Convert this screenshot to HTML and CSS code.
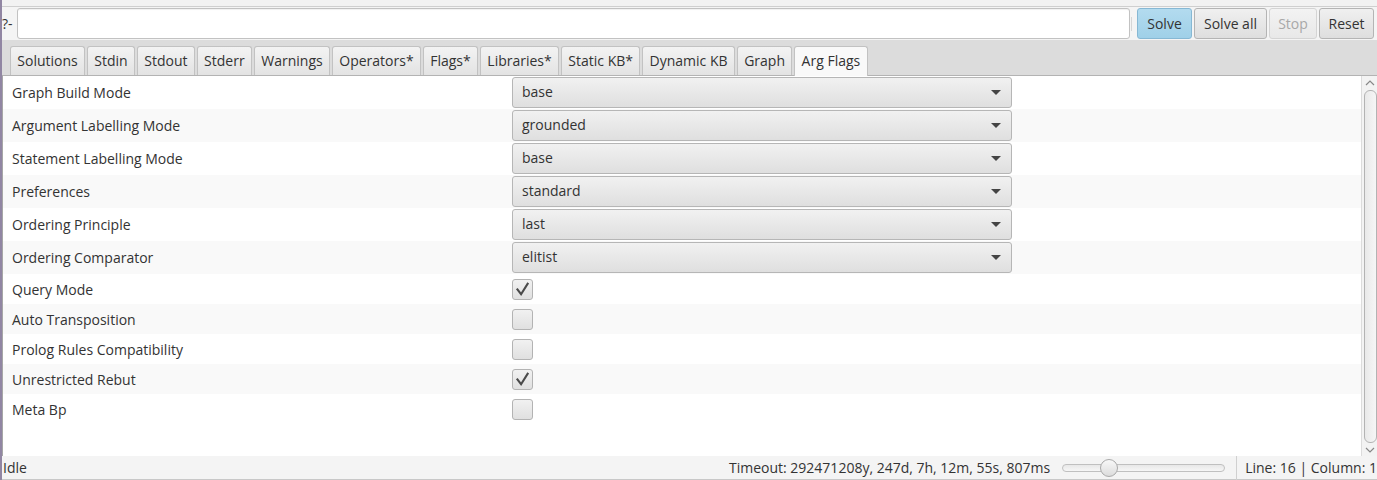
FILE: index.html
```html
<!DOCTYPE html>
<html>
<head>
<meta charset="utf-8">
<link rel="stylesheet" href="styles.css">
</head>
<body>
<div class="app">
  <div class="topstrip"></div>
  <div class="query">
    <span class="prompt">?-</span>
    <div class="field"></div>
    <div class="sep"></div>
    <div class="btns">
      <button class="btn solve">Solve</button>
      <button class="btn solveall">Solve all</button>
      <button class="btn stop disabled">Stop</button>
      <button class="btn reset">Reset</button>
    </div>
  </div>
  <div class="tabbar">
    <div class="tab">Solutions</div>
    <div class="tab">Stdin</div>
    <div class="tab">Stdout</div>
    <div class="tab">Stderr</div>
    <div class="tab">Warnings</div>
    <div class="tab">Operators*</div>
    <div class="tab">Flags*</div>
    <div class="tab">Libraries*</div>
    <div class="tab">Static KB*</div>
    <div class="tab">Dynamic KB</div>
    <div class="tab">Graph</div>
    <div class="tab active">Arg Flags</div>
  </div>
  <div class="content">
    <div class="rows">
      <div class="row combo-row"><span class="label">Graph Build Mode</span><div class="combo"><span>base</span><i class="arrow"></i></div></div>
      <div class="row combo-row alt"><span class="label">Argument Labelling Mode</span><div class="combo"><span>grounded</span><i class="arrow"></i></div></div>
      <div class="row combo-row"><span class="label">Statement Labelling Mode</span><div class="combo"><span>base</span><i class="arrow"></i></div></div>
      <div class="row combo-row alt"><span class="label">Preferences</span><div class="combo"><span>standard</span><i class="arrow"></i></div></div>
      <div class="row combo-row"><span class="label">Ordering Principle</span><div class="combo"><span>last</span><i class="arrow"></i></div></div>
      <div class="row combo-row alt"><span class="label">Ordering Comparator</span><div class="combo"><span>elitist</span><i class="arrow"></i></div></div>
      <div class="row check-row"><span class="label">Query Mode</span><div class="check"><svg viewBox="0 0 20 20" width="20" height="20"><path d="M4 9.5 L8.5 15.5 L16 3.5" fill="none" stroke="#4a4a4a" stroke-width="2.2"/></svg></div></div>
      <div class="row check-row alt"><span class="label">Auto Transposition</span><div class="check"></div></div>
      <div class="row check-row"><span class="label">Prolog Rules Compatibility</span><div class="check"></div></div>
      <div class="row check-row alt"><span class="label">Unrestricted Rebut</span><div class="check"><svg viewBox="0 0 20 20" width="20" height="20"><path d="M4 9.5 L8.5 15.5 L16 3.5" fill="none" stroke="#4a4a4a" stroke-width="2.2"/></svg></div></div>
      <div class="row check-row"><span class="label">Meta Bp</span><div class="check"></div></div>
    </div>
    <div class="scrollbar">
      <svg class="sarrow" viewBox="0 0 10 6" width="10" height="6"><path d="M1 5 L5 1 L9 5" fill="none" stroke="#888" stroke-width="1.2"/></svg>
      <div class="thumb"></div>
      <svg class="sarrow" viewBox="0 0 10 6" width="10" height="6"><path d="M1 1 L5 5 L9 1" fill="none" stroke="#888" stroke-width="1.2"/></svg>
    </div>
  </div>
  <div class="status">
    <span class="idle">Idle</span>
    <span class="timeout">Timeout: 292471208y, 247d, 7h, 12m, 55s, 807ms</span>
    <div class="slider"><div class="track"></div><div class="knob"></div></div>
    <div class="vsep"></div>
    <span class="pos">Line: 16 | Column: 1</span>
  </div>
</div>
</body>
</html>
```

FILE: styles.css
```css
* { box-sizing: border-box; }
html, body { margin: 0; padding: 0; }
body {
  font-family: "Open Sans", "Noto Sans", sans-serif;
  font-size: 14px;
  color: #333;
  background: #f4f4f4;
  width: 1377px;
  height: 480px;
  overflow: hidden;
}
.app {
  height: 480px;
  display: flex;
  flex-direction: column;
  border-left: 2px solid #9186a3;
}
.topstrip {
  height: 7px;
  background: #f2f2f2;
  border-bottom: 1px solid #cfcfcf;
  flex: none;
}
.query {
  height: 33px;
  display: flex;
  align-items: center;
  padding: 1px 3px 1px 0;
  background: #f4f4f4;
  flex: none;
}
.prompt {
  width: 15px;
  font-size: 14px;
}
.field {
  flex: 1;
  height: 31px;
  background: #fff;
  border: 1px solid #c2c2c2;
  border-radius: 3px;
  box-shadow: inset 0 1px 1px rgba(0,0,0,0.06);
}
.sep {
  width: 1px;
  height: 14px;
  background: #d6d6d6;
  margin: 0 5px 0 1px;
}
.btns { display: flex; gap: 2px; }
.btn {
  font: inherit;
  color: #333;
  height: 31px;
  padding: 0;
  border: 1px solid #b4b4b4;
  border-radius: 3px;
  background: linear-gradient(#f0f0f0, #dedede);
  line-height: 28px;
  text-align: center;
}
.btn.solve {
  background: linear-gradient(#b3dbef, #9fd0e8);
  border-color: #86b8d4;
  width: 55px;
}
.btn.solveall { width: 73px; }
.btn.stop { width: 48px; }
.btn.reset { width: 55px; }
.btn.disabled {
  color: #a8a8a8;
  border-color: #d4d4d4;
  background: linear-gradient(#f3f3f3, #e8e8e8);
}
.tabbar {
  height: 35px;
  background: #dcdcdc;
  display: flex;
  align-items: flex-end;
  gap: 2px;
  padding-left: 8px;
  flex: none;
}
.tab {
  height: 29px;
  padding: 0 6.3px;
  line-height: 27px;
  border: 1px solid #c2c2c2;
  border-bottom: none;
  border-radius: 3px 3px 0 0;
  background: linear-gradient(#f3f3f3, #e3e3e3);
  white-space: nowrap;
}
.tab.active {
  background: #f9f9f9;
  height: 30px;
  margin-bottom: -1px;
  position: relative;
  z-index: 1;
}
.content {
  flex: 1;
  display: flex;
  background: #fff;
  border-top: 1px solid #b3b3b3;
  border-left: 1px solid #a6a6a6;
  min-height: 0;
}
.rows { flex: 1; }
.row {
  display: flex;
  align-items: center;
  padding-left: 9px;
}
.row.alt { background: #f9f9f9; }
.combo-row { height: 33px; }
.check-row { height: 30px; }
.label { width: 500px; flex: none; }
.combo {
  width: 500px;
  height: 31px;
  border: 1px solid #b6b6b6;
  border-radius: 3px;
  background: linear-gradient(#f1f1f1, #dfdfdf);
  display: flex;
  align-items: center;
  justify-content: space-between;
  padding: 0 10px 2px 9px;
}
.arrow {
  width: 0;
  height: 0;
  border-left: 5px solid transparent;
  border-right: 5px solid transparent;
  border-top: 5px solid #444;
  margin-top: 2px;
}
.check {
  width: 21px;
  height: 21px;
  border: 1px solid #b3b3b3;
  border-radius: 3px;
  background: linear-gradient(#f1f1f1, #e0e0e0);
  display: flex;
  align-items: center;
  justify-content: center;
}
.scrollbar {
  width: 16px;
  flex: none;
  background: #f3f3f3;
  border-left: 1px solid #dcdcdc;
  display: flex;
  flex-direction: column;
  align-items: center;
  padding: 4px 0 3px;
  gap: 4px;
}
.thumb {
  flex: 1;
  width: 13px;
  border: 1px solid #b3b3b3;
  border-radius: 6px;
  background: linear-gradient(90deg, #e9e9e9, #f6f6f6);
  margin: 0 0 0 1px;
}
.status {
  height: 24px;
  flex: none;
  display: flex;
  align-items: center;
  background: #f4f4f4;
  border-bottom: 1px solid #c8c8c8;
}
.idle { padding-left: 1px; flex: 1; }
.timeout { margin-right: 12px; }
.slider {
  width: 163px;
  height: 20px;
  position: relative;
  margin-right: 11px;
}
.track {
  position: absolute;
  left: 0; right: 0; top: 6px;
  height: 8px;
  border: 1px solid #c0c0c0;
  border-radius: 4px;
  background: linear-gradient(#e8e8e8, #f6f6f6);
}
.knob {
  position: absolute;
  left: 38px; top: 1px;
  width: 18px; height: 18px;
  border-radius: 50%;
  border: 1px solid #a9a9a9;
  background: linear-gradient(#f8f8f8, #dcdcdc);
}
.vsep {
  width: 1px;
  height: 24px;
  background: #d0d0d0;
  margin-right: 8px;
}
.pos { white-space: nowrap; }
```
